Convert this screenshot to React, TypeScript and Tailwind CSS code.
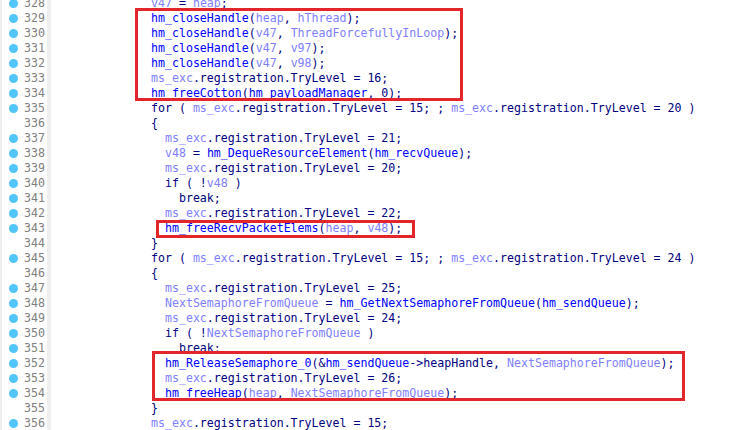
type Tok = [string, "n" | "f" | "v"];

interface Line {
  no: number;
  dot: boolean;
  indent: number;
  toks: Tok[];
}

const TL = ".registration.TryLevel";

const tryLevel = (n: number): Tok[] => [["ms_exc", "v"], [TL + " = " + n + ";", "n"]];

const lines: Line[] = [
  { no: 328, dot: true, indent: 0, toks: [["v47", "v"], [" = ", "n"], ["heap", "v"], [";", "n"]] },
  { no: 329, dot: true, indent: 0, toks: [["hm_closeHandle", "f"], ["(", "n"], ["heap", "v"], [", ", "n"], ["hThread", "v"], [");", "n"]] },
  { no: 330, dot: true, indent: 0, toks: [["hm_closeHandle", "f"], ["(", "n"], ["v47", "v"], [", ", "n"], ["ThreadForcefullyInLoop", "v"], [");", "n"]] },
  { no: 331, dot: true, indent: 0, toks: [["hm_closeHandle", "f"], ["(", "n"], ["v47", "v"], [", ", "n"], ["v97", "v"], [");", "n"]] },
  { no: 332, dot: true, indent: 0, toks: [["hm_closeHandle", "f"], ["(", "n"], ["v47", "v"], [", ", "n"], ["v98", "v"], [");", "n"]] },
  { no: 333, dot: true, indent: 0, toks: tryLevel(16) },
  { no: 334, dot: true, indent: 0, toks: [["hm_freeCotton", "f"], ["(", "n"], ["hm_payloadManager", "f"], [", 0);", "n"]] },
  { no: 335, dot: true, indent: 0, toks: [["for ( ", "n"], ["ms_exc", "v"], [TL + " = 15; ; ", "n"], ["ms_exc", "v"], [TL + " = 20 )", "n"]] },
  { no: 336, dot: false, indent: 0, toks: [["{", "n"]] },
  { no: 337, dot: true, indent: 1, toks: tryLevel(21) },
  { no: 338, dot: true, indent: 1, toks: [["v48", "v"], [" = ", "n"], ["hm_DequeResourceElement", "f"], ["(", "n"], ["hm_recvQueue", "f"], [");", "n"]] },
  { no: 339, dot: true, indent: 1, toks: tryLevel(20) },
  { no: 340, dot: true, indent: 1, toks: [["if ( !", "n"], ["v48", "v"], [" )", "n"]] },
  { no: 341, dot: true, indent: 2, toks: [["break;", "n"]] },
  { no: 342, dot: true, indent: 1, toks: tryLevel(22) },
  { no: 343, dot: true, indent: 1, toks: [["hm_freeRecvPacketElems", "f"], ["(", "n"], ["heap", "v"], [", ", "n"], ["v48", "v"], [");", "n"]] },
  { no: 344, dot: false, indent: 0, toks: [["}", "n"]] },
  { no: 345, dot: true, indent: 0, toks: [["for ( ", "n"], ["ms_exc", "v"], [TL + " = 15; ; ", "n"], ["ms_exc", "v"], [TL + " = 24 )", "n"]] },
  { no: 346, dot: false, indent: 0, toks: [["{", "n"]] },
  { no: 347, dot: true, indent: 1, toks: tryLevel(25) },
  { no: 348, dot: true, indent: 1, toks: [["NextSemaphoreFromQueue", "v"], [" = ", "n"], ["hm_GetNextSemaphoreFromQueue", "f"], ["(", "n"], ["hm_sendQueue", "f"], [");", "n"]] },
  { no: 349, dot: true, indent: 1, toks: tryLevel(24) },
  { no: 350, dot: true, indent: 1, toks: [["if ( !", "n"], ["NextSemaphoreFromQueue", "v"], [" )", "n"]] },
  { no: 351, dot: true, indent: 2, toks: [["break;", "n"]] },
  { no: 352, dot: true, indent: 1, toks: [["hm_ReleaseSemaphore_0", "f"], ["(&", "n"], ["hm_sendQueue", "f"], ["->heapHandle, ", "n"], ["NextSemaphoreFromQueue", "v"], [");", "n"]] },
  { no: 353, dot: true, indent: 1, toks: tryLevel(26) },
  { no: 354, dot: true, indent: 1, toks: [["hm_freeHeap", "f"], ["(", "n"], ["heap", "v"], [", ", "n"], ["NextSemaphoreFromQueue", "v"], [");", "n"]] },
  { no: 355, dot: false, indent: 0, toks: [["}", "n"]] },
  { no: 356, dot: true, indent: 0, toks: tryLevel(15) },
];

const colors = {
  n: "text-[#000080]",
  f: "text-[#0000ff]",
  v: "text-[#8080ff]",
};

function CodeRow({ line }: { line: Line }) {
  return (
    <div className="flex h-[15px] leading-[15px] whitespace-pre">
      <div className="flex w-[45px] shrink-0 items-center">
        <div className="w-[22px] flex justify-center pl-[1px]">
          {line.dot && <span className="block w-[9px] h-[9px] rounded-full bg-[#52c5fb]" />}
        </div>
        <span className="text-[#808080]">{line.no}</span>
      </div>
      <div className="w-[4px] shrink-0 bg-[#efefef]" />
      <div className="pl-[100px]">
        {"  ".repeat(line.indent)}
        {line.toks.map(([text, kind], i) => (
          <span key={i} className={colors[kind]}>
            {text}
          </span>
        ))}
      </div>
    </div>
  );
}

export default function App() {
  return (
    <div className="relative w-[736px] h-[430px] overflow-hidden bg-white border-l-2 border-[#eeeeee] font-['DejaVu_Sans_Mono',monospace] text-[11.6px]">
      <div className="-mt-[4px]">
        {lines.map((l) => (
          <CodeRow key={l.no} line={l} />
        ))}
      </div>
      {/* red annotation boxes */}
      <div className="absolute left-[133px] top-[8px] w-[328px] h-[93px] border-[3px] border-[#e3262c]" />
      <div className="absolute left-[154px] top-[220px] w-[259px] h-[18px] border-[3px] border-[#e3262c]" />
      <div className="absolute left-[150px] top-[351px] w-[533px] h-[50px] border-[3px] border-[#e3262c]" />
    </div>
  );
}
